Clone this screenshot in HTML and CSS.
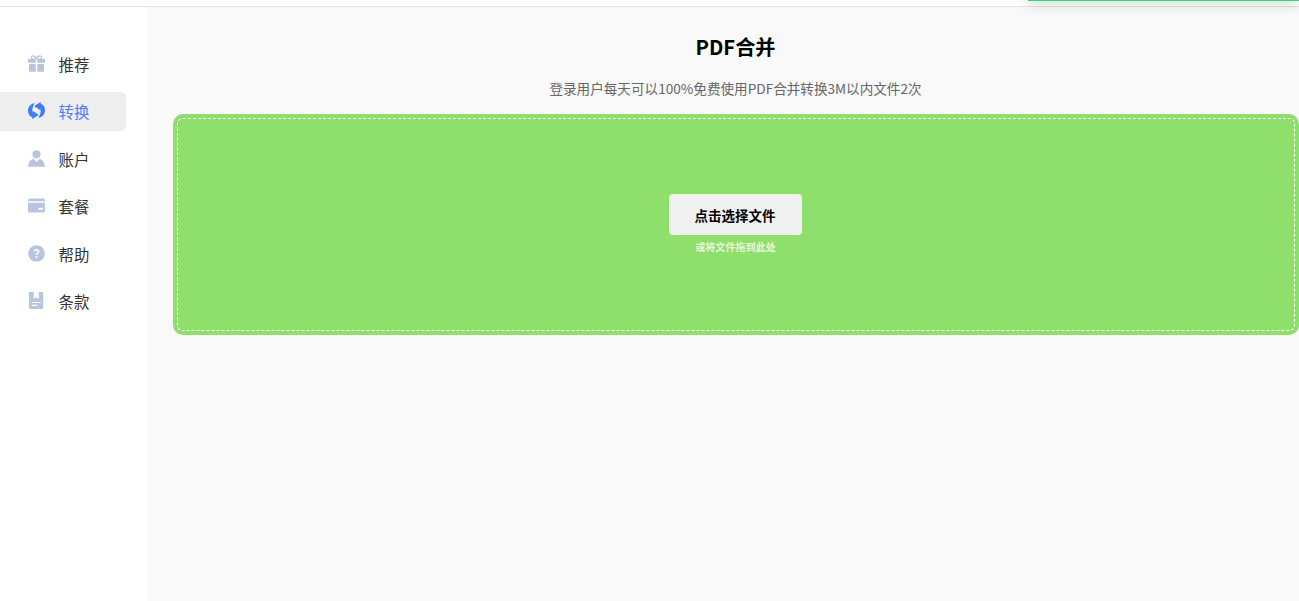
FILE: index.html
```html
<!DOCTYPE html>
<html lang="zh-CN">
<head>
  <meta charset="UTF-8" />
  <meta name="viewport" content="width=device-width, initial-scale=1.0"/>
  <title>PDF合并</title>
  <link rel="stylesheet" href="styles.css">
</head>
<body>

  <!-- Top bar -->
  <div class="topbar"></div>
  <!-- Bottom edge of the notice sliding in from the top -->
  <div class="notice"></div>

  <div class="layout">
    <!-- Side menu -->
    <nav class="sidebar">
      <a class="nav-item" href="#">
        <svg class="nav-icon" viewBox="0 0 18 18"><path fill-rule="evenodd" d="M5.600 0.300c1.400 0 2.600 1 3.400 2.400 0.800-1.400 2-2.400 3.400-2.400 1.700 0 2.700 0.900 2.700 2.300 0 0.600-0.200 1.100-0.600 1.600H18v4H9.800V4.400H8.200v3.800H0v-4h3.500c-0.400-0.500-0.600-1-0.600-1.600 0-1.400 1-2.300 2.700-2.300zM5.600 1.600c-0.800 0-1.300 0.300-1.300 1 0 0.700 0.900 1.600 3.300 1.600-0.500-1.400-1.200-2.600-2-2.600zM12.400 1.600c-0.800 0-1.500 1.200-2 2.600 2.400 0 3.300-0.900 3.300-1.600 0-0.700-0.500-1-1.300-1zM1 9.400h7.200V17.700H2c-0.600 0-1-0.400-1-1zM9.800 9.400H17v7.300c0 0.600-0.400 1-1 1H9.800z"/></svg>
        <span>推荐</span>
      </a>
      <a class="nav-item active" href="#">
        <svg class="nav-icon" viewBox="0 0 18 18"><path d="M13.500 0L6.500 4.200L13.500 9V6C14 8 13.500 12.500 11 17C15.500 16 18 12.500 18 9C18 5.500 16.500 3 13.500 1.800Z"/><path d="M4.500 18L11.500 13.800L4.500 9V12C4 10 4.500 5.500 7 1C2.500 2 0 5.500 0 9C0 12.500 1.500 15 4.500 16.200Z"/></svg>
        <span>转换</span>
      </a>
      <a class="nav-item" href="#">
        <svg class="nav-icon" viewBox="0 0 18 18"><circle cx="9" cy="4.600" r="4.300"/><path d="M5.600 9.300L9 12.700l3.400-3.400c3.200 0.900 5.100 3.700 5.600 8.400H0C0.500 13 2.400 10.200 5.600 9.300z"/></svg>
        <span>账户</span>
      </a>
      <a class="nav-item" href="#">
        <svg class="nav-icon" viewBox="0 0 18 18"><path fill-rule="evenodd" d="M2 1.500h14c1.100 0 2 0.900 2 2v1H0v-1c0-1.100 0.900-2 2-2zM0 6h18v8.500c0 1.100-0.900 2-2 2H2c-1.100 0-2-0.900-2-2zM11 11.500v2h5v-2z"/></svg>
        <span>套餐</span>
      </a>
      <a class="nav-item" href="#">
        <svg class="nav-icon" viewBox="0 0 18 18"><path fill-rule="evenodd" d="M9 0.200a8.800 8.800 0 1 1 0 17.600 8.800 8.800 0 0 1 0-17.600zM9 4.200c-1.800 0-3 1-3.100 2.700h1.700c0.100-0.800 0.600-1.200 1.400-1.200 0.800 0 1.300 0.400 1.300 1.100 0 0.500-0.200 0.800-0.900 1.300-0.900 0.600-1.200 1.200-1.200 2.100v0.500h1.700v-0.400c0-0.500 0.200-0.800 0.900-1.300 0.900-0.600 1.300-1.300 1.300-2.300 0-1.500-1.200-2.500-2.900-2.500zM9 11.700c-0.600 0-1.100 0.500-1.100 1.100s0.500 1.100 1.100 1.100 1.100-0.500 1.100-1.100-0.500-1.100-1.100-1.100z"/></svg>
        <span>帮助</span>
      </a>
      <a class="nav-item" href="#">
        <svg class="nav-icon" viewBox="0 0 18 18"><path fill-rule="evenodd" d="M2.500 0H6v7.500l2.800-2 2.700 2V0h3c0.800 0 1.500 0.700 1.500 1.500V17c0 0.600-0.400 1-1 1H2.500C1.700 18 1 17.300 1 16.500V1.500C1 0.700 1.700 0 2.500 0zM4 10.500V11.700h9.500V10.500zM4 13.500V14.700h6V13.500z"/></svg>
        <span>条款</span>
      </a>
    </nav>

    <!-- Main content -->
    <main class="content">
      <h1 class="title">PDF合并</h1>
      <p class="subtitle">登录用户每天可以100%免费使用PDF合并转换3M以内文件2次</p>
      <div class="dropzone">
        <div class="dropzone-inner">
          <button class="pick-btn">点击选择文件</button>
          <p class="drop-hint">或将文件拖到此处</p>
        </div>
      </div>
    </main>
  </div>

</body>
</html>
```

FILE: styles.css
```css
* {
  box-sizing: border-box;
}

html,
body {
  height: 100%;
}

body {
  margin: 0;
  overflow: hidden;
  display: flex;
  flex-direction: column;
  position: relative;
  font-family: "Noto Sans CJK SC", "Noto Sans", sans-serif;
  background: #fff;
  color: #333;
}

.topbar {
  flex: none;
  height: 7px;
  background: #fff;
  border-bottom: 1px solid #e2e2e2;
}

.notice {
  position: absolute;
  top: -40px;
  right: 0;
  width: 271px;
  height: 41px;
  background: #fff;
  border-bottom: 1px solid #2fd67f;
  box-shadow: 0 3px 12px rgba(0, 0, 0, 0.16);
}

.layout {
  flex: 1;
  display: flex;
  min-height: 0;
}

.sidebar {
  flex: none;
  width: 147px;
  padding: 37px 21px 0 0;
  background: #fff;
  display: flex;
  flex-direction: column;
  gap: 8.5px;
}

.nav-item {
  height: 39px;
  padding-left: 28px;
  display: flex;
  align-items: center;
  gap: 13.5px;
  border-radius: 0 5px 5px 0;
  font-size: 15.4px;
  color: #333;
  text-decoration: none;
}

.nav-item.active {
  background: #eee;
  color: #4d7cfe;
}

.nav-icon {
  flex: none;
  width: 17px;
  height: 17px;
  margin-top: -1px;
  fill: #b8c5de;
}

.active .nav-icon {
  fill: #3f7df6;
}

.content {
  flex: 1;
  min-width: 0;
  padding: 25px 0 0 26px;
  background: #f9f9f9;
  text-align: center;
}

.title {
  margin: 0;
  padding-right: 1px;
  font-size: 20.2px;
  line-height: 29px;
  font-weight: 700;
  color: #000;
}

.subtitle {
  margin: 17px 0 0;
  padding-right: 1px;
  font-size: 13.6px;
  line-height: 20px;
  color: #666;
}

.dropzone {
  height: 221px;
  margin-top: 16px;
  padding: 4px;
  background: #8edf6c;
  border-radius: 10px;
}

.dropzone-inner {
  height: 100%;
  padding: 75px 2px 0 0;
  border: 1px dashed #fff;
  border-radius: 6px;
}

.pick-btn {
  display: block;
  width: 133px;
  height: 41px;
  margin: 0 auto;
  border: none;
  border-radius: 4px;
  background: #f0f0f0;
  font-family: inherit;
  font-size: 13.5px;
  font-weight: 700;
  color: #000;
}

.drop-hint {
  margin: 5px 0 0;
  padding-left: 1px;
  font-size: 10.1px;
  line-height: 14px;
  font-weight: 700;
  color: #e6f7df;
}
```
